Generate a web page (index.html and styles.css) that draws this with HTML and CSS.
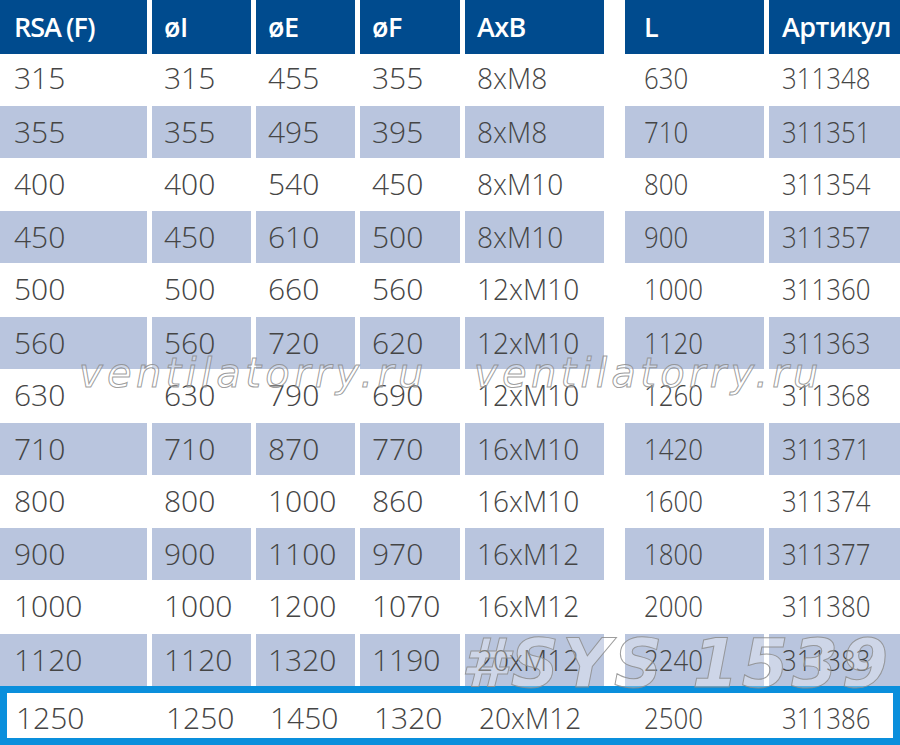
FILE: index.html
```html
<!DOCTYPE html>
<html lang="ru">
<head>
<meta charset="utf-8">
<title>RSA (F)</title>
<link rel="stylesheet" href="styles.css">
</head>
<body>
<div class="sheet">
  <div class="row head">
    <div class="c c1">RSA (F)</div><div class="c">øI</div><div class="c">øE</div><div class="c">øF</div><div class="c">AxB</div><div class="c c6">L</div><div class="c c7">Артикул</div>
  </div>
  <div class="row">
    <div class="c c1">315</div><div class="c">315</div><div class="c">455</div><div class="c">355</div><div class="c c5"><span class="n">8xM8</span></div><div class="c c6"><span class="n">630</span></div><div class="c c7"><span class="n">311348</span></div>
  </div>
  <div class="row alt">
    <div class="c c1">355</div><div class="c">355</div><div class="c">495</div><div class="c">395</div><div class="c c5"><span class="n">8xM8</span></div><div class="c c6"><span class="n">710</span></div><div class="c c7"><span class="n">311351</span></div>
  </div>
  <div class="row">
    <div class="c c1">400</div><div class="c">400</div><div class="c">540</div><div class="c">450</div><div class="c c5"><span class="n">8xM10</span></div><div class="c c6"><span class="n">800</span></div><div class="c c7"><span class="n">311354</span></div>
  </div>
  <div class="row alt">
    <div class="c c1">450</div><div class="c">450</div><div class="c">610</div><div class="c">500</div><div class="c c5"><span class="n">8xM10</span></div><div class="c c6"><span class="n">900</span></div><div class="c c7"><span class="n">311357</span></div>
  </div>
  <div class="row">
    <div class="c c1">500</div><div class="c">500</div><div class="c">660</div><div class="c">560</div><div class="c c5"><span class="n">12xM10</span></div><div class="c c6"><span class="n">1000</span></div><div class="c c7"><span class="n">311360</span></div>
  </div>
  <div class="row alt">
    <div class="c c1">560</div><div class="c">560</div><div class="c">720</div><div class="c">620</div><div class="c c5"><span class="n">12xM10</span></div><div class="c c6"><span class="n">1120</span></div><div class="c c7"><span class="n">311363</span></div>
  </div>
  <div class="row">
    <div class="c c1">630</div><div class="c">630</div><div class="c">790</div><div class="c">690</div><div class="c c5"><span class="n">12xM10</span></div><div class="c c6"><span class="n">1260</span></div><div class="c c7"><span class="n">311368</span></div>
  </div>
  <div class="row alt">
    <div class="c c1">710</div><div class="c">710</div><div class="c">870</div><div class="c">770</div><div class="c c5"><span class="n">16xM10</span></div><div class="c c6"><span class="n">1420</span></div><div class="c c7"><span class="n">311371</span></div>
  </div>
  <div class="row">
    <div class="c c1">800</div><div class="c">800</div><div class="c">1000</div><div class="c">860</div><div class="c c5"><span class="n">16xM10</span></div><div class="c c6"><span class="n">1600</span></div><div class="c c7"><span class="n">311374</span></div>
  </div>
  <div class="row alt">
    <div class="c c1">900</div><div class="c">900</div><div class="c">1100</div><div class="c">970</div><div class="c c5"><span class="n">16xM12</span></div><div class="c c6"><span class="n">1800</span></div><div class="c c7"><span class="n">311377</span></div>
  </div>
  <div class="row">
    <div class="c c1">1000</div><div class="c">1000</div><div class="c">1200</div><div class="c">1070</div><div class="c c5"><span class="n">16xM12</span></div><div class="c c6"><span class="n">2000</span></div><div class="c c7"><span class="n">311380</span></div>
  </div>
  <div class="row alt">
    <div class="c c1">1120</div><div class="c">1120</div><div class="c">1320</div><div class="c">1190</div><div class="c c5"><span class="n">20xM12</span></div><div class="c c6"><span class="n">2240</span></div><div class="c c7"><span class="n">311383</span></div>
  </div>
  <div class="row last">
    <div class="c c1">1250</div><div class="c">1250</div><div class="c">1450</div><div class="c">1320</div><div class="c c5"><span class="n">20xM12</span></div><div class="c c6"><span class="n">2500</span></div><div class="c c7"><span class="n">311386</span></div>
  </div>

  <span class="wm wm-site wm-a">ventilatorry.ru</span>
  <span class="wm wm-site wm-b">ventilatorry.ru</span>
  <span class="wm wm-sys">#SYS 1539</span>
</div>
</body>
</html>
```

FILE: styles.css
```css
html, body {
  margin: 0;
  padding: 0;
  background: #ffffff;
}

body {
  width: 900px;
  height: 745px;
  overflow: hidden;
  font-family: "Open Sans", "Noto Sans", sans-serif;
}

.sheet {
  position: relative;
  width: 900px;
  height: 745px;
}

.row {
  display: grid;
  grid-template-columns: 147px 99px 99px 100px 139px 155px 131px;
  column-gap: 5px;
  height: 52.83px;
}

.c {
  padding-left: 12px;
  font-family: "Open Sans Light", "Open Sans", "Noto Sans", sans-serif;
  font-size: 30px;
  font-weight: 300;
  line-height: 52px;
  color: #454545;
  white-space: nowrap;
}

.c1 { padding-left: 14px; }
.c6 { margin-left: 16px; padding-left: 19px; }
.c7 { padding-left: 13px; }

.n {
  display: inline-block;
  transform-origin: left center;
}

.c5 .n { transform: scaleX(0.935); }
.c6 .n,
.c7 .n { transform: scaleX(0.86); }

.head {
  height: 52px;
}

.head .c {
  background: #004b8e;
  color: #ffffff;
  font-family: "Open Sans", "Noto Sans", sans-serif;
  font-size: 27px;
  font-weight: 600;
  letter-spacing: -0.6px;
  line-height: 54px;
}

.head .c1 {
  word-spacing: -1px;
  letter-spacing: -1px;
}

.alt .c {
  background: #b9c5de;
  margin-top: 1px;
  line-height: 51px;
}

.last {
  height: 59px;
  box-shadow: inset 0 0 0 7px #0a8fdc;
}

.last .c {
  line-height: 64px;
  padding-left: 14px;
}

.last .c1 { padding-left: 16px; }
.last .c6 { padding-left: 19px; }
.last .c7 { padding-left: 13px; }

.wm {
  position: absolute;
  line-height: 1;
  white-space: nowrap;
  pointer-events: none;
  color: rgba(255, 255, 255, 0.3);
  -webkit-text-stroke: 1px rgba(140, 140, 140, 0.85);
  font-family: "DejaVu Sans", sans-serif;
  font-style: oblique;
}

.wm-site {
  top: 353px;
  font-size: 40px;
  font-weight: 400;
  letter-spacing: 4.3px;
}

.wm-a { left: 79px; }
.wm-b { left: 474px; }

.wm-sys {
  top: 631px;
  left: 461px;
  font-size: 67px;
  font-weight: 700;
  letter-spacing: 3.2px;
}
```
